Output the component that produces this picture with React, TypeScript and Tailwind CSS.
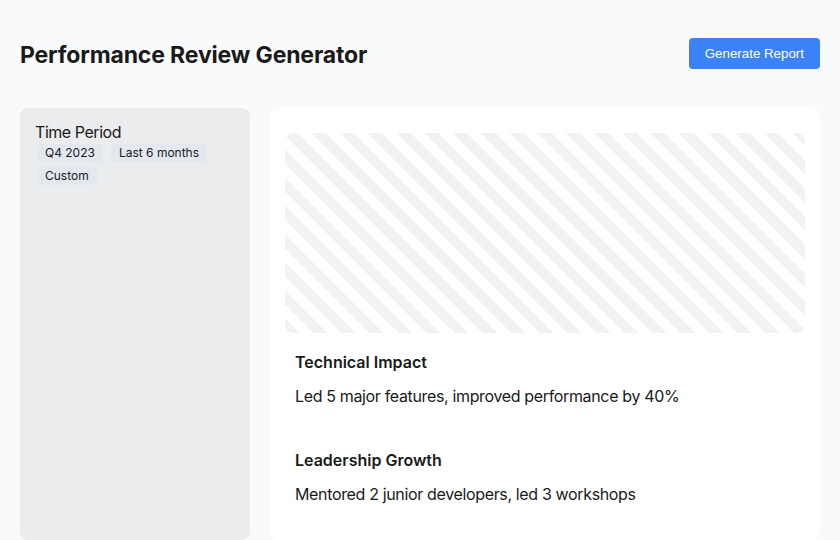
const periods = ['Q4 2023', 'Last 6 months', 'Custom']

const highlights = [
  { title: 'Technical Impact', body: 'Led 5 major features, improved performance by 40%' },
  { title: 'Leadership Growth', body: 'Mentored 2 junior developers, led 3 workshops' },
]

export default function App() {
  return (
    <main className="flex h-[540px] flex-col overflow-hidden bg-[#f9fafb] px-5 pt-[38px] font-['Inter',sans-serif] text-[#1a1a1a]">
      <header className="flex items-start justify-between">
        <h1 className="mt-[2px] text-[23px] font-bold leading-[31px] tracking-[-0.15px]">Performance Review Generator</h1>
        <button
          type="button"
          className="h-[31px] rounded-[4px] bg-[#3b82f6] px-4 font-['Liberation_Sans',sans-serif] text-[13.33px] text-white"
        >
          Generate Report
        </button>
      </header>

      <div className="mt-[37px] flex flex-1 gap-5">
        <aside className="w-[230px] shrink-0 rounded-lg bg-[#ebecee] p-[15px] pt-[13px]">
          <h2 className="text-[16px] leading-[22px] tracking-[-0.45px]">Time Period</h2>
          <div className="ml-[2px] mt-[1px] flex flex-wrap gap-x-2 gap-y-[5px]">
            {periods.map((p) => (
              <span key={p} className="rounded-[4px] bg-[#e3e8ef] px-2 text-[12px] leading-[18px]">
                {p}
              </span>
            ))}
          </div>
        </aside>

        <section className="flex-1 rounded-lg bg-white px-[15px] pt-[25px]">
          <div className="h-[200px] rounded-lg bg-[repeating-linear-gradient(45deg,#f2f2f2_0px,#f2f2f2_10px,#ffffff_10px,#ffffff_20px)]" />
          <div className="mt-[9px]">
            {highlights.map((h) => (
              <div key={h.title} className="p-[10px] pb-[34px]">
                <h3 className="text-[16px] font-semibold leading-[20px]">{h.title}</h3>
                <p className="mt-[14px] text-[16px] leading-[20px] tracking-[-0.35px]">{h.body}</p>
              </div>
            ))}
          </div>
        </section>
      </div>
    </main>
  )
}
